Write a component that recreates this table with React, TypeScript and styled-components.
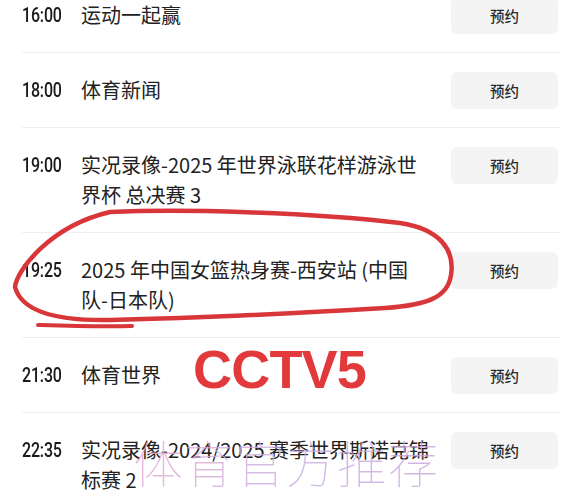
import React from "react";
import styled, { createGlobalStyle } from "styled-components";

const Global = createGlobalStyle`
  html, body { margin: 0; padding: 0; background: #fff; }
  body { font-family: "Noto Sans CJK SC", "Noto Sans", sans-serif; }
`;

const Page = styled.div`
  position: relative;
  width: 581px;
  height: 500px;
  overflow: hidden;
  background: #fff;
`;

const List = styled.div`
  display: flex;
  flex-direction: column;
  margin-top: -22px;
  padding: 0 21px 0 22px;
`;

const Row = styled.div`
  display: flex;
  align-items: flex-start;
  padding: 22px 2px 22px 0;
  border-bottom: 1px solid #efefef;
`;

const Time = styled.div`
  flex: 0 0 59px;
  height: 30px;
  display: flex;
  align-items: center;
`;

const TimeText = styled.span`
  display: inline-block;
  font-family: Roboto, "Liberation Sans", sans-serif;
  font-size: 20px;
  font-weight: 500;
  color: #1a1a1a;
  transform: scaleX(0.8);
  transform-origin: left center;
  letter-spacing: -0.2px;
`;

const Title = styled.div`
  flex: 1;
  max-width: 350px;
  font-family: "Noto Sans CJK SC", sans-serif;
  font-size: 20px;
  line-height: 30px;
  color: #222;
`;

const Button = styled.button`
  flex: 0 0 107px;
  height: 37px;
  margin: -3px 0 -4px auto;
  border: none;
  border-radius: 6px;
  background: #f4f4f4;
  color: #2a2a2a;
  font-family: "Noto Sans CJK SC", sans-serif;
  font-size: 14.5px;
  font-weight: 500;
  padding: 0;
`;

const Brand = styled.div`
  position: absolute;
  left: 193px;
  top: 336px;
  font-family: "Liberation Sans", Arial, sans-serif;
  font-weight: 700;
  font-size: 54px;
  letter-spacing: -0.8px;
  line-height: 66px;
  color: #e23a3c;
`;

const Watermark = styled.div`
  position: absolute;
  left: 133px;
  top: 431px;
  font-family: "Noto Sans CJK SC", sans-serif;
  font-weight: 100;
  font-size: 50px;
  letter-spacing: 1px;
  line-height: 60px;
  background: linear-gradient(90deg, #e3a6cf 0%, #c9aee4 50%, #c9a2dc 100%);
  -webkit-background-clip: text;
  background-clip: text;
  color: transparent;
  opacity: 0.8;
`;

const Mark = styled.svg`
  position: absolute;
  left: 0;
  top: 0;
  pointer-events: none;
`;

const items = [
  { time: "16:00", title: "运动一起赢" },
  { time: "18:00", title: "体育新闻" },
  { time: "19:00", title: "实况录像-2025 年世界泳联花样游泳世界杯 总决赛 3" },
  { time: "19:25", title: "2025 年中国女篮热身赛-西安站 (中国队-日本队)" },
  { time: "21:30", title: "体育世界" },
  { time: "22:35", title: "实况录像-2024/2025 赛季世界斯诺克锦标赛 2" },
];

export default function App() {
  return (
    <Page>
      <Global />
      <List>
        {items.map((it) => (
          <Row key={it.time}>
            <Time>
              <TimeText>{it.time}</TimeText>
            </Time>
            <Title>{it.title}</Title>
            <Button>预约</Button>
          </Row>
        ))}
      </List>
      <Brand>CCTV5</Brand>
      <Watermark>体育官方推荐</Watermark>
      <Mark width="581" height="500" viewBox="0 0 581 500">
        <path
          d="M 110 212 C 180 209, 310 212, 400 223 C 440 229, 455 250, 451 275 C 448 297, 428 305, 385 308 C 300 313, 200 318, 110 320 C 60 321, 22 313, 15 287 C 17 270, 50 226, 110 212"
          fill="none"
          stroke="#d9363a"
          strokeWidth="4.5"
          strokeLinecap="round"
        />
        <path
          d="M 38 325 C 70 326, 100 327, 132 326"
          fill="none"
          stroke="#d9363a"
          strokeWidth="4"
          strokeLinecap="round"
        />
      </Mark>
    </Page>
  );
}
